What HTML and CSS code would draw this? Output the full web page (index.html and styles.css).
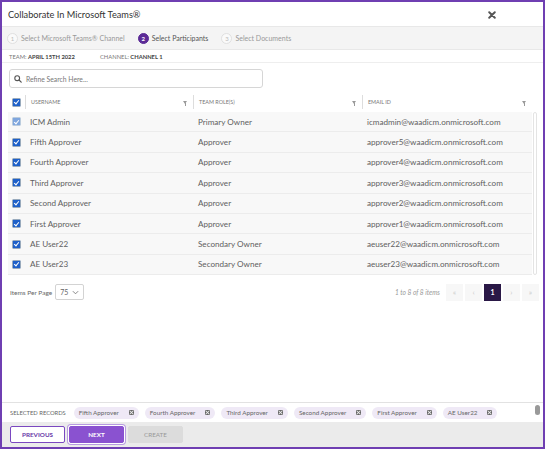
FILE: index.html
```html
<!DOCTYPE html>
<html>
<head>
<meta charset="utf-8">
<link rel="stylesheet" href="styles.css">
</head>
<body>
<div class="dialog">
  <div class="header">
    <div class="title">Collaborate In Microsoft Teams®</div>
    <svg class="close" width="8" height="8" viewBox="0 0 10 10"><path d="M1.5 1.5 L8.5 8.5 M8.5 1.5 L1.5 8.5" stroke="#555" stroke-width="2.4" stroke-linecap="round"/></svg>
  </div>
  <div class="stepper">
    <div class="step"><span class="num">1</span><span>Select Microsoft Teams® Channel</span></div>
    <div class="step active"><span class="num">2</span><span>Select Participants</span></div>
    <div class="step"><span class="num">3</span><span>Select Documents</span></div>
  </div>
  <div class="meta">
    <span class="m1">TEAM: <b>APRIL 15TH 2022</b></span>
    <span>CHANNEL: <b>CHANNEL 1</b></span>
  </div>
  <div class="search">
    <svg width="8" height="8" viewBox="0 0 10 10"><circle cx="4" cy="4" r="3" fill="none" stroke="#555" stroke-width="1.4"/><path d="M6.3 6.3 L9 9" stroke="#555" stroke-width="1.5" stroke-linecap="round"/></svg>
    <span>Refine Search Here...</span>
  </div>
  <div class="table">
    <div class="thead">
      <div class="cell cb"><span class="check"></span></div>
      <div class="cell hd"><span>USERNAME</span><span class="filter"></span></div>
      <div class="cell hd"><span>TEAM ROLE(S)</span><span class="filter"></span></div>
      <div class="cell hd"><span>EMAIL ID</span><span class="filter"></span></div>
    </div>
    <div class="tbody-wrap">
      <div class="tbody">
        <div class="row"><div class="cb"><span class="check dis"></span></div><div>ICM Admin</div><div>Primary Owner</div><div>icmadmin@waadicm.onmicrosoft.com</div></div>
        <div class="row"><div class="cb"><span class="check"></span></div><div>Fifth Approver</div><div>Approver</div><div>approver5@waadicm.onmicrosoft.com</div></div>
        <div class="row"><div class="cb"><span class="check"></span></div><div>Fourth Approver</div><div>Approver</div><div>approver4@waadicm.onmicrosoft.com</div></div>
        <div class="row"><div class="cb"><span class="check"></span></div><div>Third Approver</div><div>Approver</div><div>approver3@waadicm.onmicrosoft.com</div></div>
        <div class="row"><div class="cb"><span class="check"></span></div><div>Second Approver</div><div>Approver</div><div>approver2@waadicm.onmicrosoft.com</div></div>
        <div class="row"><div class="cb"><span class="check"></span></div><div>First Approver</div><div>Approver</div><div>approver1@waadicm.onmicrosoft.com</div></div>
        <div class="row"><div class="cb"><span class="check"></span></div><div>AE User22</div><div>Secondary Owner</div><div>aeuser22@waadicm.onmicrosoft.com</div></div>
        <div class="row"><div class="cb"><span class="check"></span></div><div>AE User23</div><div>Secondary Owner</div><div>aeuser23@waadicm.onmicrosoft.com</div></div>
      </div>
      <div class="vscroll"></div>
    </div>
  </div>
  <div class="pager">
    <div class="ipp">
      <span>Items Per Page</span>
      <div class="select"><span>75</span><svg width="7" height="5" viewBox="0 0 8 5"><path d="M1 1 L4 4 L7 1" fill="none" stroke="#777" stroke-width="1"/></svg></div>
    </div>
    <div class="pages">
      <span class="info">1 to 8 of 8 items</span>
      <span class="pbtn">«</span>
      <span class="pbtn">‹</span>
      <span class="pbtn cur">1</span>
      <span class="pbtn">›</span>
      <span class="pbtn">»</span>
    </div>
  </div>
  <div class="spacer"></div>
  <div class="selected">
    <span class="sel-label">SELECTED RECORDS</span>
    <span class="chip">Fifth Approver<span class="x"></span></span>
    <span class="chip">Fourth Approver<span class="x"></span></span>
    <span class="chip">Third Approver<span class="x"></span></span>
    <span class="chip">Second Approver<span class="x"></span></span>
    <span class="chip">First Approver<span class="x"></span></span>
    <span class="chip">AE User22<span class="x"></span></span>
    <span class="sthumb"></span>
  </div>
  <div class="footer">
    <button class="btn prev">PREVIOUS</button>
    <button class="btn next">NEXT</button>
    <button class="btn create">CREATE</button>
  </div>
</div>
</body>
</html>
```

FILE: styles.css
```css
* { box-sizing: border-box; }
html, body { margin: 0; padding: 0; }
body {
  font-family: "Lato", "Open Sans", sans-serif;
  color: #444;
  background: #fff;
}
.dialog {
  height: 449px;
  width: 545px;
  border: 2px solid #6f3fb2;
  display: flex;
  flex-direction: column;
  overflow: hidden;
}
.header {
  height: 24px;
  display: flex;
  align-items: center;
  justify-content: space-between;
  padding: 0 47px 0 6px;
}
.title { font-size: 9.2px; color: #333; }
.close { margin-top: 1px; }
.stepper {
  height: 24px;
  background: #f4f4f4;
  border-top: 1px solid #e8e8e8;
  border-bottom: 1px solid #e8e8e8;
  display: flex;
  align-items: center;
  padding-left: 5px;
  font-size: 7px;
  color: #999;
}
.step { display: flex; align-items: center; gap: 3px; margin-right: 13px; }
.num {
  width: 11px; height: 11px;
  border-radius: 50%;
  border: 1px solid #e0e0e0;
  background: #fafafa;
  font-size: 6px;
  color: #bbb;
  display: inline-flex; align-items: center; justify-content: center;
}
.step.active { color: #555; }
.step.active .num { background: #5b2a96; border-color: #5b2a96; color: #fff; font-weight: bold; }
.meta {
  height: 13px;
  display: flex;
  align-items: center;
  padding-left: 7px;
  font-size: 5.8px;
  color: #777;
  border-bottom: 1px solid #eee;
}
.meta b { color: #444; }
.m1 { width: 91px; }
.search {
  margin: 6px 0 0 7px;
  width: 254px;
  height: 19px;
  border: 1px solid #d6d6d6;
  border-radius: 3px;
  display: flex;
  align-items: center;
  gap: 4px;
  padding-left: 4px;
  font-size: 6.8px;
  color: #777;
}
.table { margin: 6px 6px 0 6px; }
.thead {
  display: grid;
  grid-template-columns: 17px 168px 169px 170px;
  height: 16px;
  align-items: center;
  width: 524px;
}
.cell { height: 14px; display: flex; align-items: center; }
.cell.cb { justify-content: center; }
.hd {
  border-left: 1px solid #ddd;
  justify-content: space-between;
  padding: 0 6px 0 5px;
  font-size: 5.4px;
  color: #777;
}
.filter {
  width: 0; height: 0;
  border-left: 2.5px solid transparent;
  border-right: 2.5px solid transparent;
  border-top: 3px solid #999;
  position: relative;
}
.filter::after {
  content: "";
  position: absolute;
  left: -0.5px; top: -1px;
  width: 1px; height: 3px;
  background: #999;
}
.check {
  width: 9px; height: 9px;
  border-radius: 1.5px;
  background: #1e60c9;
  border: 1px solid #9ab;
  display: inline-block;
  position: relative;
}
.check::after {
  content: "";
  position: absolute;
  left: 2px; top: 0.5px;
  width: 2px; height: 4px;
  border-right: 1.2px solid #fff;
  border-bottom: 1.2px solid #fff;
  transform: rotate(40deg);
}
.check.dis { background: #7fa6de; border-color: #bcd; }
.tbody-wrap { display: flex; margin-top: 2px; }
.tbody { width: 524px; }
.row {
  display: grid;
  grid-template-columns: 17px 168px 169px 170px;
  height: 20.4px;
  align-items: center;
  background: #f8f8f8;
  border-bottom: 1px solid #ececec;
  font-size: 8.1px;
  color: #5f5f5f;
}
.row > div:not(.cb) { padding-left: 5px; }
.row .cb { display: flex; justify-content: center; }
.vscroll {
  width: 6px;
  margin-left: 1px;
  border: 1px solid #e4e4e4;
  border-radius: 3px;
  background: #fff;
}
.pager {
  margin: 8px 4px 0 8px;
  display: flex;
  justify-content: space-between;
  align-items: center;
  height: 18px;
}
.ipp { display: flex; align-items: center; gap: 3px; font-size: 6.5px; color: #666; }
.select {
  width: 29px; height: 16px;
  border: 1px solid #d3d3d3;
  border-radius: 2px;
  display: flex; align-items: center; justify-content: space-between;
  padding: 0 4px;
  font-size: 7px; color: #666;
}
.pages { display: flex; align-items: center; gap: 2px; font-size: 7px; color: #bbb; }
.info { font-style: italic; font-size: 6.6px; color: #999; margin-right: 4px; }
.pbtn {
  width: 17px; height: 17px;
  display: inline-flex; align-items: center; justify-content: center;
  background: #f7f7f7;
  color: #ccc;
  font-size: 8px;
}
.pbtn.cur { background: #2a1846; color: #fff; font-weight: bold; font-size: 7px; }
.spacer { flex: 1; }
.selected {
  height: 20px;
  border-top: 1px solid #e2e2e2;
  display: flex;
  align-items: center;
  padding-left: 8px;
  gap: 6px;
  font-size: 6.3px;
  color: #666;
  position: relative;
}
.sel-label { font-size: 5.8px; margin-right: 2px; }
.chip {
  height: 12px;
  background: #efe9f6;
  border-radius: 6px;
  display: inline-flex;
  align-items: center;
  padding: 0 5px 0 5px;
  gap: 10px;
  color: #666;
}
.x {
  width: 5px; height: 5px;
  background: #666;
  position: relative;
  border-radius: 1px;
}
.x::before, .x::after {
  content: "";
  position: absolute;
  left: 2px; top: 0;
  width: 1px; height: 5px;
  background: #eee;
  transform: rotate(45deg);
}
.x::after { transform: rotate(-45deg); }
.sthumb {
  position: absolute;
  right: 3px; top: 2px;
  width: 5px; height: 10px;
  background: #999;
  border-radius: 3px;
}
.footer {
  height: 25px;
  background: #ebebeb;
  display: flex;
  align-items: center;
  padding-left: 8px;
  gap: 4px;
}
.btn {
  height: 17px;
  width: 55px;
  font-family: "Lato", "Open Sans", sans-serif;
  font-size: 6.3px;
  font-weight: bold;
  border-radius: 2px;
  padding: 0;
}
.prev { background: #fff; border: 1px solid #7a48c0; color: #6a3aa8; }
.next { background: #8a52d0; border: 1px solid #8a52d0; color: #fff; box-shadow: 0 0 0 1px #fff, 0 0 0 2px #b79be0; }
.create { background: #dcdcdc; border: 1px solid #dcdcdc; color: #999; font-weight: normal; }
```
